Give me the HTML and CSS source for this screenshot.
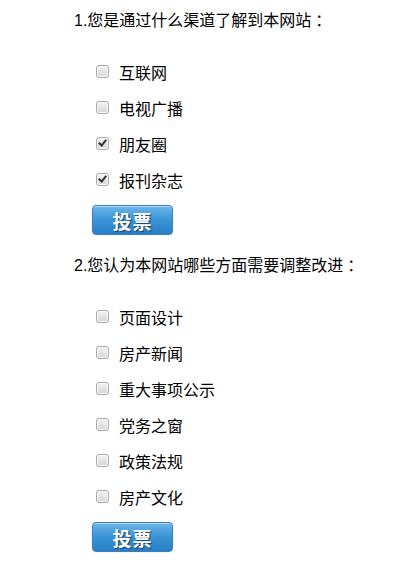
FILE: index.html
```html
<!DOCTYPE html>
<html lang="zh-CN">

<head>
    <meta charset="UTF-8">
    <meta name="viewport" content="width=device-width, initial-scale=1.0">
    <title>网站调查</title>
    <link rel="stylesheet" href="styles.css">
</head>

<body>
    <div class="survey">
        <div class="question">
            <h3>1.您是通过什么渠道了解到本网站<span class="colon">：</span></h3>
            <ul class="options">
                <li><label><input type="checkbox" name="q1"> 互联网</label></li>
                <li><label><input type="checkbox" name="q1"> 电视广播</label></li>
                <li><label><input type="checkbox" name="q1" checked> 朋友圈</label></li>
                <li><label><input type="checkbox" name="q1" checked> 报刊杂志</label></li>
            </ul>
            <button class="vote-btn">投票</button>
        </div>

        <div class="question">
            <h3>2.您认为本网站哪些方面需要调整改进<span class="colon">：</span></h3>
            <ul class="options">
                <li><label><input type="checkbox" name="q2"> 页面设计</label></li>
                <li><label><input type="checkbox" name="q2"> 房产新闻</label></li>
                <li><label><input type="checkbox" name="q2"> 重大事项公示</label></li>
                <li><label><input type="checkbox" name="q2"> 党务之窗</label></li>
                <li><label><input type="checkbox" name="q2"> 政策法规</label></li>
                <li><label><input type="checkbox" name="q2"> 房产文化</label></li>
            </ul>
            <button class="vote-btn">投票</button>
        </div>
    </div>
</body>

</html>
```

FILE: styles.css
```css
body {
    margin: 0;
    font-family: "Liberation Sans", "Noto Sans CJK SC", sans-serif;
    font-size: 16px;
    color: #000;
    background-color: white;
}

.survey {
    padding: 10px 0 0 74px;
}

.question {
    margin-bottom: 20px;
}

h3 {
    margin: 0;
    font-size: 16px;
    font-weight: normal;
    line-height: 22px;
}

.colon {
    margin-left: 4px;
}

.options {
    list-style: none;
    margin: 22px 0 7px 0;
    padding: 0 0 0 22px;
}

.options li {
    height: 36px;
    display: flex;
    align-items: center;
}

.options label {
    display: flex;
    align-items: center;
    gap: 10px;
}

input[type="checkbox"] {
    appearance: none;
    -webkit-appearance: none;
    width: 13px;
    height: 13px;
    margin: 0;
    border: 1px solid #a8a8a8;
    border-radius: 3px;
    background: linear-gradient(#f2f2f2, #d6d6d6);
    box-shadow: inset 0 0 0 1px #fafafa;
    position: relative;
    top: -1px;
}

input[type="checkbox"]:checked::after {
    content: "";
    position: absolute;
    left: 3px;
    top: 0px;
    width: 3px;
    height: 6px;
    border: solid #333;
    border-width: 0 2px 2px 0;
    transform: rotate(40deg);
}

.vote-btn {
    display: block;
    width: 81px;
    height: 30px;
    margin-left: 18px;
    padding: 0;
    border: 1px solid #3b7fc0;
    border-radius: 4px;
    background: linear-gradient(#6db5ea, #3a93d6 50%, #2a7fc4);
    box-shadow: inset 0 1px 0 rgba(255, 255, 255, 0.5), 0 0 1px #8ab8f0;
    color: white;
    font-family: "Noto Sans CJK SC", sans-serif;
    font-size: 19px;
    font-weight: bold;
    letter-spacing: 1px;
    text-shadow: 1px 1px 1px #1c3e66;
    cursor: pointer;
}
```
